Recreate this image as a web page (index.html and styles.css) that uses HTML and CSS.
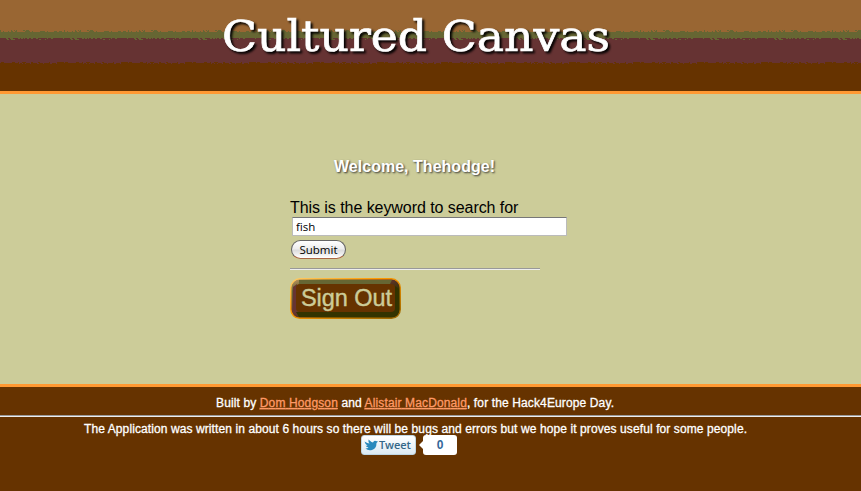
FILE: index.html
```html
<!DOCTYPE html>
<html lang="en">
<head>
<meta charset="utf-8">
<title>Cultured Canvas</title>
<link rel="stylesheet" href="styles.css">
</head>
<body>
<header class="banner">
  <svg class="strata" width="100%" height="91" shape-rendering="crispEdges" aria-hidden="true">
    <defs>
      <pattern id="rough" width="64" height="91" patternUnits="userSpaceOnUse">
        <path fill="#996633" d="M0 0h64v32H0z"/>
        <path fill="#666633" d="M0 32h64v7H0z"/>
        <path fill="#663333" d="M0 39h64v23H0z"/>
        <path fill="#663300" d="M0 62h64v29H0z"/>
        <path stroke="#666633" d="M0 30.5h1m10 0h1m2 0h1m1 0h1m6 0h2m1 0h3M0 31.5h1m2 0h1m4 0h1m2 0h2m2 0h2m8 0h5m2 0h1m7 0h5m2 0h1m6 0h3m2 0h3"/>
        <path stroke="#663333" d="M0 38.5h6m2 0h2m3 0h5m2 0h1m2 0h1m1 0h2m2 0h2m2 0h3m2 0h9m1 0h3m2 0h10"/>
        <path stroke="#666633" d="M7 39.5h2m2 0h4m24 0h2m4 0h1"/>
        <path stroke="#663333" d="M0 62.5h1m3 0h8m3 0h3m1 0h3m4 0h5m2 0h5m2 0h9m1 0h7M19 63.5h1m2 0h1m2 0h1m4 0h1m6 0h2m4 0h1m6 0h2m4 0h1"/>
      </pattern>
    </defs>
    <rect width="100%" height="91" fill="url(#rough)"/>
  </svg>
  <svg class="wordmark" width="430" height="80">
    <text x="12" y="51" textLength="388" lengthAdjust="spacingAndGlyphs">Cultured Canvas</text>
  </svg>
</header>
<main>
  <h1><svg width="180" height="26"><text class="welcome" x="9" y="18" textLength="161">Welcome, Thehodge!</text></svg></h1>
  <form class="search">
    <label for="keyword">This is the keyword to search for</label>
    <input id="keyword" type="text" value="fish">
    <button type="button" class="submit">Submit</button>
    <hr class="rule">
    <button type="button" class="signout" aria-label="Sign Out">
      <svg width="112" height="42">
        <defs>
          <linearGradient id="edge" x1="0" y1="0" x2="1" y2="1"><stop offset="0" stop-color="#cc9966"/><stop offset=".16" stop-color="#666633"/><stop offset=".45" stop-color="#663333"/><stop offset=".65" stop-color="#333300"/></linearGradient>
          <linearGradient id="rim" x1="0" y1="0" x2="1" y2="1"><stop offset="0" stop-color="#ffcc66"/><stop offset=".4" stop-color="#ff9900"/><stop offset="1" stop-color="#996600"/></linearGradient>
        </defs>
        <rect x=".8" y=".8" width="109.5" height="39.5" rx="9" fill="url(#edge)" stroke="url(#rim)" stroke-width="1.4"/>
        <path fill="#666633" d="M9 2h93l-2 4H9z"/>
        <path fill="#663333" d="M3 9l4-3v26l-4 1z"/>
        <path fill="#333300" d="M105 8l4 3v21q0 7-7 7H9l-3-5h93q6 0 6-6z"/>
        <rect x="6" y="6" width="99" height="28" rx="4" fill="#663300"/>
        <text class="signout-label" x="11" y="28" textLength="91">Sign Out</text>
      </svg>
    </button>
  </form>
</main>
<footer>
  <svg class="line" width="430" height="26"><text x="1" y="17" textLength="398">Built by <tspan class="link">Dom Hodgson</tspan> and <tspan class="link">Alistair MacDonald</tspan>, for the Hack4Europe Day.</text></svg>
  <hr>
  <svg class="line wide" width="680" height="17"><text x="1" y="16" textLength="663">The Application was written in about 6 hours so there will be bugs and errors but we hope it proves useful for some people.</text></svg>
  <div class="share">
    <a class="tweet"><svg width="14" height="12" viewBox="0 0 28 24"><path fill="#2989bd" d="M1 5q6 4 10 4Q8 5 9 1q5 5 9 6 2-5 6-3l4 1-3 3q0 11-9 14-8 2-13-3 4 0 6-2-5-1-6-4 2 1 4 0-5-3-6-8z"/></svg><span>Tweet</span></a>
    <span class="count">0</span>
  </div>
</footer>
</body>
</html>
```
FILE: styles.css
```css
* { box-sizing: border-box; }
body { margin: 0; height: 491px; overflow: hidden; background: #663300; font-family: "Liberation Sans", Arial, sans-serif; }
svg { display: block; }
.banner { position: relative; height: 94px; border-bottom: 3px solid #ff9933; }
.wordmark { position: absolute; left: 210px; top: 0; font: 43.5px "DejaVu Serif", serif; fill: #fff; stroke: #fff; stroke-width: .7; filter: drop-shadow(2px 2px 1px #000); }
main { height: 290px; padding: 60px 0 0 290px; background: #cccc99; }
h1 { margin: 0 0 0 35px; height: 44px; }
.welcome { font: bold 16px "Liberation Sans", sans-serif; fill: #fff; text-shadow: 1px 1px 2px #333; }
.search { display: flex; flex-direction: column; align-items: flex-start; width: 280px; }
label { font-size: 16px; line-height: 19px; letter-spacing: -.06px; }
#keyword { width: 275px; height: 19px; margin: 0 0 0 2px; padding: 0 3px 1px; border: 1px solid #bbb; border-top: 1px solid #777; background: #fff; color: #000; font: 11.5px "Open Sans", sans-serif; outline: 0; }
.submit { width: 55px; height: 19px; margin: 4px 0 0 1px; padding: 0 0 1px; border: 1px solid #666; border-bottom-color: #a64; border-radius: 10px; background: linear-gradient(#fff, #eee 45%, #ddd 55%, #fff); color: #000; font: 11.5px/15px "Open Sans", sans-serif; }
.rule { width: 250px; height: 2px; margin: 9px 0 8px; border: 0; border-top: 1px solid #999; background: #eee; }
.signout { padding: 0; border: 0; background: none; }
.signout-label { font: 23.5px "Liberation Sans", sans-serif; fill: #cccc99; stroke: #cccc99; stroke-width: .4; }
footer { height: 107px; border-top: 3px solid #ff9933; background: #663300; }
.line { margin-left: 215px; padding-top: 3px; font-size: 12px; fill: #fff; stroke: #fff; stroke-width: .3; }
.wide { margin-left: 83px; padding: 0; overflow: visible; }
.link { fill: #ff9966; stroke: #ff9966; text-decoration: underline; }
footer hr { height: 2px; margin: 2px 0 0; border: 0; border-top: 1px solid #999; background: #eee; }
.share { display: flex; margin: 1px 0 0 361px; }
.tweet { display: flex; align-items: center; gap: 1px; width: 55px; height: 20px; padding-left: 2px; border: 1px solid #bfd6e4; border-radius: 3px; background: linear-gradient(#fff, #dceaf3); color: #336688; font: 600 11px/16px "Open Sans", sans-serif; letter-spacing: -.1px; }
.count { position: relative; width: 34px; height: 20px; margin-left: 7px; border-radius: 3px; background: #fff; color: #336699; font: bold 12px/20px "Liberation Sans", sans-serif; text-align: center; }
.count::before { content: ""; position: absolute; left: -4px; top: 6px; border: 4px solid transparent; border-left: 0; border-right-color: #fff; }
```
